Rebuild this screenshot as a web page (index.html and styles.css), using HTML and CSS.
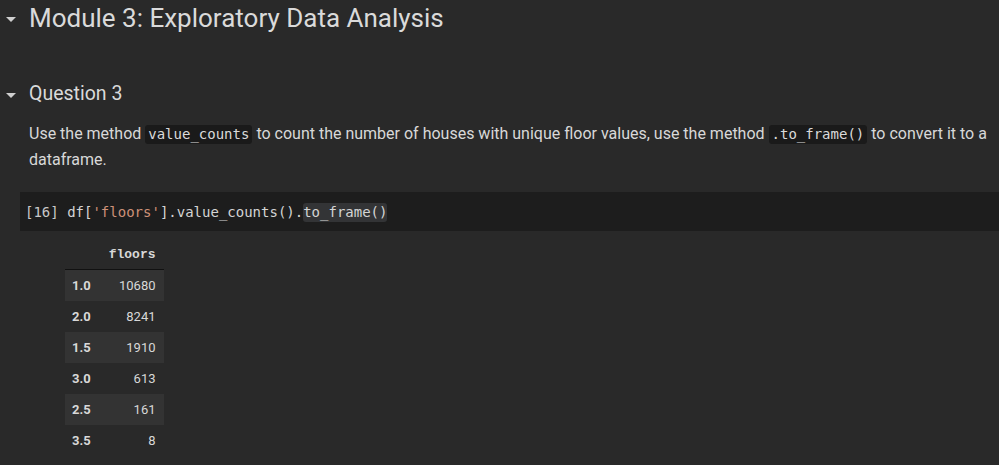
FILE: index.html
```html
<!DOCTYPE html>
<html>
<head>
<meta charset="utf-8">
<link rel="stylesheet" href="styles.css">
</head>
<body>
<div class="nb">
  <div class="head h1">
    <span class="caret"></span>
    <span class="title">Module 3: Exploratory Data Analysis</span>
  </div>
  <div class="head h2">
    <span class="caret"></span>
    <span class="title">Question 3</span>
  </div>
  <p class="text">Use the method <code class="ic">value_counts</code> to count the number of houses with unique floor values, use the method <code class="ic">.to_frame()</code> to convert it to a dataframe.</p>
  <div class="cell">
    <span class="line"><span class="count">[16]</span> df[<span class="str">'floors'</span>].value_counts().<span class="hl">to_frame()</span></span>
  </div>
  <div class="out">
    <table class="df">
      <thead><tr><th></th><th class="colh">floors</th></tr></thead>
      <tbody>
        <tr class="odd"><th>1.0</th><td>10680</td></tr>
        <tr><th>2.0</th><td>8241</td></tr>
        <tr class="odd"><th>1.5</th><td>1910</td></tr>
        <tr><th>3.0</th><td>613</td></tr>
        <tr class="odd"><th>2.5</th><td>161</td></tr>
        <tr><th>3.5</th><td>8</td></tr>
      </tbody>
    </table>
  </div>
</div>
</body>
</html>
```
FILE: styles.css
```css
html, body {
  margin: 0;
  padding: 0;
  background: #292929;
}
body {
  width: 999px;
  height: 465px;
  overflow: hidden;
  font-family: Roboto, "Liberation Sans", sans-serif;
  color: #d8d8d8;
}
.nb {
  display: flex;
  flex-direction: column;
}
.head {
  display: flex;
  align-items: center;
}
.caret {
  width: 0;
  height: 0;
  border-left: 5px solid transparent;
  border-right: 5px solid transparent;
  border-top: 5px solid #cfcfcf;
  margin-left: 6px;
  margin-right: 13px;
}
.h1 {
  height: 36px;
}
.h1 .title {
  font-size: 26px;
  line-height: 36px;
  color: #dadada;
}
.h1 .caret { margin-top: 2px; }
.h2 {
  margin-top: 44px;
  height: 28px;
}
.h2 .title {
  font-size: 19.5px;
  line-height: 28px;
  color: #dadada;
}
.h2 .caret { margin-top: 2px; }
.text {
  margin: 13px 0 0 29px;
  width: 962px;
  font-size: 16px;
  line-height: 25px;
  color: #d8d8d8;
}
.ic {
  font-family: "DejaVu Sans Mono", monospace;
  font-size: 14px;
  background: #1a1a1a;
  padding: 1px 3px 2px;
  border-radius: 3px;
  color: #dadada;
}
.cell {
  margin: 20px 0 0 20px;
  height: 39px;
  background: #1d1d1d;
  display: flex;
  align-items: center;
  padding-left: 5px;
  font-family: "DejaVu Sans Mono", monospace;
  font-size: 14px;
  color: #d4d4d4;
}
.line {
  white-space: pre;
  line-height: 20px;
}
.count { color: #c8c8c8; }
.str { color: #ce9178; }
.hl {
  background: #333436;
  border-radius: 3px;
  padding: 1px 0 2px;
}
.out {
  padding-left: 65px;
  margin-top: 8px;
}
.df {
  border-collapse: collapse;
  font-size: 13px;
  color: #d8d8d8;
}
.df thead th {
  height: 30px;
  border-bottom: 1px solid #111;
  padding: 0 8px;
  vertical-align: middle;
}
.colh {
  font-family: "Liberation Mono", "Courier New", monospace;
  font-weight: bold;
  text-align: right;
}
.df tbody th {
  font-weight: bold;
  text-align: left;
  padding: 0 10px 0 7px;
  height: 31px;
}
.df tbody td {
  text-align: right;
  padding: 0 8px 0 10px;
  height: 31px;
}
.df tr.odd { background: #333333; }
```
